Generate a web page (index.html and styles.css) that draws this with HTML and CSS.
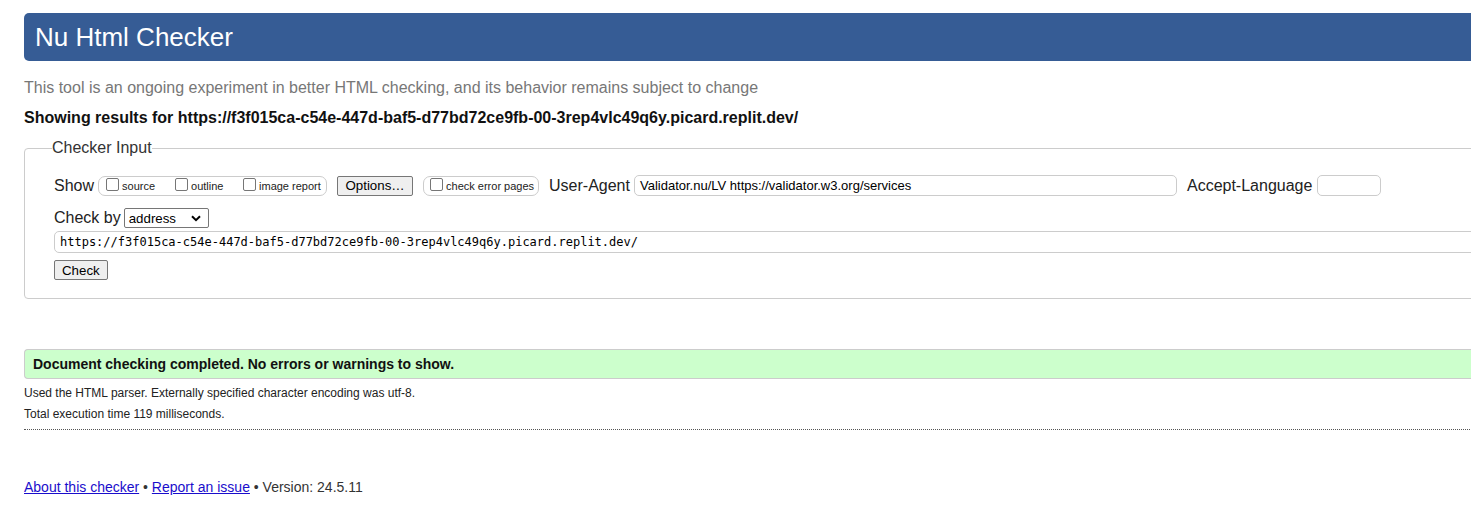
FILE: index.html
```html
<!DOCTYPE html>
<html lang="en">
<head>
<meta charset="utf-8">
<title>Nu Html Checker</title>
<link rel="stylesheet" href="styles.css">
</head>
<body>
<div class="page">
  <h1 class="banner">Nu Html Checker</h1>
  <p class="intro">This tool is an ongoing experiment in better HTML checking, and its behavior remains subject to change</p>
  <p class="showing">Showing results for https://f3f015ca-c54e-447d-baf5-d77bd72ce9fb-00-3rep4vlc49q6y.picard.replit.dev/</p>

  <fieldset class="checker">
    <legend class="legend">Checker Input</legend>
    <div class="row row-show">
      <span class="lbl">Show</span>
      <span class="group group-show">
        <label class="opt opt-source"><span class="cb"></span>source</label>
        <label class="opt opt-outline"><span class="cb"></span>outline</label>
        <label class="opt opt-image"><span class="cb"></span>image report</label>
      </span>
      <button class="btn btn-options" type="button">Options…</button>
      <span class="group group-errors">
        <label class="opt"><span class="cb"></span>check error pages</label>
      </span>
      <span class="lbl lbl-ua">User-Agent</span>
      <span class="field field-ua">Validator.nu/LV https://validator.w3.org/services</span>
      <span class="lbl lbl-al">Accept-Language</span>
      <span class="field field-al"></span>
    </div>
    <div class="row row-by">
      <span class="lbl">Check by</span>
      <span class="select">address
        <svg class="chev" width="10" height="7" viewBox="0 0 10 7"><path d="M1 1.2 L5 5.2 L9 1.2" fill="none" stroke="#000" stroke-width="2"/></svg>
      </span>
    </div>
    <div class="field field-url">https://f3f015ca-c54e-447d-baf5-d77bd72ce9fb-00-3rep4vlc49q6y.picard.replit.dev/</div>
    <div class="row row-check">
      <button class="btn btn-check" type="button">Check</button>
    </div>
  </fieldset>

  <p class="success">Document checking completed. No errors or warnings to show.</p>
  <p class="details">Used the HTML parser. Externally specified character encoding was utf-8.</p>
  <p class="details details-time">Total execution time 119 milliseconds.</p>
  <hr class="rule">

  <p class="footer"><a href="#">About this checker</a> • <a href="#">Report an issue</a> • Version: 24.5.11</p>
</div>
</body>
</html>
```

FILE: styles.css
```css
html { overflow: hidden; }
body {
  margin: 0;
  padding: 13px 0 0 24px;
  font-family: "Liberation Sans", Arial, sans-serif;
  color: #222;
  background: #fff;
}
.page { width: 1520px; }

.banner {
  margin: 0;
  height: 48px;
  background: #365c95;
  color: #fff;
  font-weight: normal;
  font-size: 26px;
  line-height: 48px;
  padding-left: 11px;
  border-radius: 5px;
}

.intro {
  margin: 17px 0 0;
  font-size: 16px;
  line-height: 20px;
  color: #777;
}
.showing {
  margin: 10px 0 0;
  font-size: 16px;
  line-height: 20px;
  font-weight: bold;
  color: #111;
}

.checker {
  margin: 11px 0 0;
  padding: 14px 0 18px 27px;
  border: 1px solid #ccc;
  border-radius: 4px;
}
.legend {
  padding: 0;
  font-size: 16px;
  color: #333;
}

.row {
  display: flex;
  align-items: center;
  margin-left: 2px;
}
.lbl { font-size: 16px; color: #222; }

.group {
  display: inline-flex;
  align-items: center;
  height: 20px;
  box-sizing: border-box;
  border: 1px solid #ccc;
  border-radius: 7px;
  padding: 0 5px 0 7px;
}
.group-show { margin-left: 4px; width: 229px; }
.group-errors { margin-left: 10px; width: 116px; padding-left: 6px; }

.opt {
  display: inline-flex;
  align-items: center;
  font-size: 11px;
  color: #222;
  white-space: nowrap;
}
.opt-source { width: 69px; }
.opt-outline { width: 68px; }
.cb {
  width: 13px;
  height: 13px;
  box-sizing: border-box;
  border: 1px solid #767676;
  border-radius: 2px;
  margin: 0 3px 2px 0;
  background: #fff;
}

.btn {
  font-family: "Liberation Sans", Arial, sans-serif;
  font-size: 13.3px;
  color: #000;
  background: #efefef;
  border: 1px solid #767676;
  border-radius: 2px;
  height: 20px;
  padding: 0 6px;
}
.btn-options { margin-left: 10px; width: 76px; }
.lbl-ua { margin-left: 10px; }
.field {
  box-sizing: border-box;
  height: 21px;
  border: 1px solid #ccc;
  border-radius: 5px;
  font-size: 13px;
  line-height: 19px;
  padding-left: 5px;
  color: #000;
  white-space: nowrap;
}
.field-ua { margin-left: 4px; width: 543px; }
.lbl-al { margin-left: 10px; }
.field-al { margin-left: 5px; width: 64px; }

.row-show { margin-top: 4px; }
.row-by { margin-top: 12px; }
.select {
  display: inline-flex;
  align-items: center;
  justify-content: space-between;
  box-sizing: border-box;
  width: 85px;
  height: 20px;
  margin-left: 3px;
  padding: 0 7px 0 4px;
  border: 1px solid #767676;
  border-radius: 2px;
  font-size: 13.3px;
  color: #000;
}
.chev { display: block; }

.field-url {
  margin: 3px 0 0 2px;
  width: 1500px;
  height: 22px;
  font-family: "DejaVu Sans Mono", "Liberation Mono", monospace;
  font-size: 12px;
  line-height: 20px;
}
.row-check { margin-top: 7px; }
.btn-check { padding: 0 7px; }

.success {
  margin: 50px 0 0;
  height: 30px;
  box-sizing: border-box;
  background: #ccffcc;
  border: 1px solid #ccc;
  border-right: none;
  border-radius: 4px 0 0 4px;
  font-size: 14px;
  font-weight: bold;
  line-height: 28px;
  padding-left: 8px;
  color: #111;
}
.details {
  margin: 7px 0 0;
  font-size: 12px;
  line-height: 15px;
  color: #222;
}
.details-time { margin-top: 6px; }
.rule {
  margin: 7px 0 0;
  border: none;
  border-top: 1px dotted #555;
  height: 0;
}
.footer {
  margin: 48px 0 0;
  font-size: 14px;
  line-height: 18px;
  color: #333;
}
.footer a { color: #1a0dcc; }
```
